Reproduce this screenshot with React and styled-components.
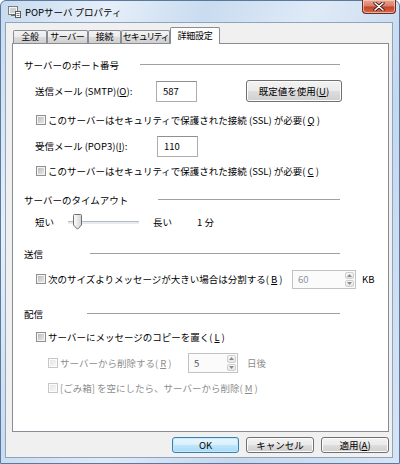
import React from "react";
import styled, { createGlobalStyle } from "styled-components";

const GlobalStyle = createGlobalStyle`
  html, body {
    margin: 0;
    padding: 0;
    background: #ffffff;
  }
  body {
    font-family: "Noto Sans CJK JP", "Noto Sans", sans-serif;
    font-size: 9.5px;
    color: #000000;
  }
`;

const Window = styled.div`
    width: 400px;
    height: 464px;
    box-sizing: border-box;
    border: 1px solid #5b789e;
    border-radius: 6px 6px 0 0;
    background: linear-gradient(115deg, #c6daef 0%, #e6eff9 18%, #c9dcf0 34%, #dfeaf7 52%, #c4d8ee 72%, #d6e5f5 100%);
    padding: 0 6px 5px 4px;

    display: flex;
    flex-direction: column;
`;

const TitleBar = styled.div`
    height: 21px;
    display: flex;
    align-items: flex-start;

    & > svg{
        margin: 4px 0 0 3px;
    }
`;

const Title = styled.span`
    margin: 4px 0 0 4px;
    flex: 1;
    line-height: 14px;
    color: #000;
`;

const CloseButton = styled.div`
    width: 34px;
    height: 14px;
    margin: -1px -3px 0 0;
    box-sizing: border-box;
    border: 1px solid #6e2b1f;
    border-top: none;
    border-radius: 0 0 4px 4px;
    background: linear-gradient(#e9a491 0%, #d98068 45%, #c2452d 55%, #d46a4a 100%);
    box-shadow: inset 0 0 0 1px rgba(255, 220, 210, 0.6);

    display: flex;
    align-items: center;
    justify-content: center;
`;

const Client = styled.div`
    flex: 1;
    background: #f0f0f0;
    border: 1px solid #8ea3bd;
    padding: 4px 3px 4px 6px;

    display: flex;
    flex-direction: column;
`;

const TabStrip = styled.div`
    height: 16px;
    padding-left: 1px;
    display: flex;
    align-items: flex-end;
    position: relative;
    z-index: 1;
`;

const Tab = styled.div`
    width: ${p => p.$w}px;
    height: ${p => p.$active ? 17 : 13}px;
    margin-bottom: ${p => p.$active ? -1 : 0}px;
    box-sizing: border-box;
    border: 1px solid #898c95;
    border-bottom: none;
    border-radius: 2px 2px 0 0;
    background: ${p => p.$active ? "#ffffff" : "linear-gradient(#f3f3f3 0%, #ebebeb 50%, #dcdcdc 51%, #cfcfcf 100%)"};

    display: flex;
    align-items: center;
    justify-content: center;
    font-size: 9px;
    line-height: 12px;
    letter-spacing: -0.2px;
    white-space: nowrap;
    overflow: hidden;
    font-feature-settings: "palt";
`;

const Panel = styled.div`
    flex: 1;
    background: #ffffff;
    border: 1px solid #898c95;
    padding: 11px 0 0 11px;

    display: flex;
    flex-direction: column;
`;

const Header = styled.div`
    width: 316px;
    height: 20px;
    margin-top: ${p => p.$mt || 0}px;
    display: flex;
    align-items: center;
`;

const HeaderText = styled.span`
    width: ${p => p.$w}px;
    flex-shrink: 0;
    white-space: nowrap;
`;

const Rule = styled.div`
    flex: 1;
    height: 1px;
    background: #a0a0a0;
    margin-top: -1px;
`;

const Row = styled.div`
    height: ${p => p.$h || 20}px;
    margin-top: ${p => p.$mt || 0}px;
    padding-left: ${p => p.$indent || 0}px;
    display: flex;
    align-items: center;
    white-space: nowrap;
    color: ${p => p.$disabled ? "#8d8d8d" : "#000"};
`;

const Label = styled.span`
    width: ${p => p.$w ? `${p.$w}px` : "auto"};
    flex-shrink: 0;
    margin-left: ${p => p.$ml || 0}px;
`;

const Check = styled.label`
    width: ${p => p.$w ? `${p.$w}px` : "auto"};
    display: flex;
    align-items: center;
    gap: 2px;
    flex-shrink: 0;
`;

const Box = styled.span`
    width: 10px;
    height: 10px;
    box-sizing: border-box;
    flex-shrink: 0;
    border: 1px solid ${p => p.$disabled ? "#c6c6c6" : "#8e8f8f"};
    box-shadow: inset 0 0 0 1px ${p => p.$disabled ? "#fbfbfb" : "#f4f4f4"};
    background: ${p => p.$disabled
        ? "linear-gradient(135deg, #e2e2e2, #fafafa)"
        : "linear-gradient(135deg, #b4b6b9, #eeeeef)"};
`;

const TextBox = styled.div`
    width: ${p => p.$w}px;
    height: 21px;
    box-sizing: border-box;
    border: 1px solid #abadb3;
    border-top-color: #8e9095;
    background: #ffffff;
    padding-left: 6px;
    display: flex;
    align-items: center;
`;

const Spin = styled.div`
    width: ${p => p.$w}px;
    height: ${p => p.$h}px;
    margin-left: ${p => p.$ml || 0}px;
    box-sizing: border-box;
    border: 1px solid #c3c3c3;
    background: #fbfbfb;
    padding: 1px;
    display: flex;
    align-items: stretch;
`;

const SpinValue = styled.span`
    flex: 1;
    padding-left: 4px;
    display: flex;
    align-items: center;
    color: ${p => p.$muted ? "#8e95a0" : "#555"};
`;

const SpinButtons = styled.div`
    width: 9px;
    display: flex;
    flex-direction: column;
    gap: 1px;
`;

const SpinBtn = styled.div`
    flex: 1;
    border: 1px solid #cfcfcf;
    border-radius: 2px;
    background: linear-gradient(#f7f7f7, #e6e6e6);
    display: flex;
    align-items: center;
    justify-content: center;
`;

const Button = styled.button`
    width: ${p => p.$w}px;
    height: ${p => p.$h}px;
    margin-left: ${p => p.$ml || 0}px;
    box-sizing: border-box;
    padding: 0;
    border: 1px solid ${p => p.$default ? "#3c7fb1" : "#707070"};
    border-radius: 3px;
    background: ${p => p.$default
        ? "linear-gradient(#eaf6fd 0%, #d9f0fc 48%, #bee6fd 52%, #a7d9f5 100%)"
        : "linear-gradient(#f2f2f2 0%, #ebebeb 48%, #dddddd 52%, #cfcfcf 100%)"};
    box-shadow: inset 0 0 0 1px ${p => p.$default ? "#c6e9fb" : "#fcfcfc"};
    font: inherit;
    color: #000;
    line-height: 12px;
    white-space: nowrap;
`;

const ButtonRow = styled.div`
    height: 16px;
    margin-top: 5px;
    display: flex;
    justify-content: flex-end;
    gap: 7px;
`;

const Slider = styled.div`
    width: ${p => p.$w}px;
    height: 16px;
    margin-left: ${p => p.$ml || 0}px;
    position: relative;
    display: flex;
    align-items: center;
`;

const Track = styled.div`
    width: 100%;
    height: 2px;
    border-top: 1px solid #b6bcc4;
    background: #e7eaee;
    box-shadow: 0 1px 0 #ffffff;
`;

const Thumb = styled.svg`
    position: absolute;
    top: 0;
`;

const Mnemonic = ({ k }) => (<>(<u>{k}</u>)</>);

const Arrow = ({ up }) => (
    <svg width="5" height="3" viewBox="0 0 5 3">
        <path d={up ? "M0 3 L2.5 0 L5 3 Z" : "M0 0 L2.5 3 L5 0 Z"} fill="#8a8a8a" />
    </svg>
);

const SpinBox = ({ w, h, ml, value, muted }) => (
    <Spin $w={w} $h={h} $ml={ml}>
        <SpinValue $muted={muted}>{value}</SpinValue>
        <SpinButtons>
            <SpinBtn><Arrow up /></SpinBtn>
            <SpinBtn><Arrow /></SpinBtn>
        </SpinButtons>
    </Spin>
);

function App() {
    const sliderValue = 1;
    const thumbLeft = 5 + (sliderValue - 1) * 7;

    return (
        <>
            <GlobalStyle />
            <Window>
                <TitleBar>
                    <svg width="13" height="13" viewBox="0 0 13 13">
                        <rect x="0.5" y="1.5" width="9" height="8" fill="#f4f4f4" stroke="#7d7d7d" />
                        <rect x="2" y="3" width="6" height="5" fill="#c9d3dc" />
                        <rect x="3" y="9.5" width="4" height="1.5" fill="#6a6a6a" />
                        <rect x="7.5" y="6.5" width="5" height="6" fill="#ffffff" stroke="#5a5a5a" />
                        <path d="M8.5 8.5 H11.5 M8.5 10.5 H11.5" stroke="#5a5a5a" strokeWidth="0.8" />
                    </svg>
                    <Title>POPサーバ プロパティ</Title>
                    <CloseButton>
                        <svg width="12" height="9" viewBox="0 0 12 9">
                            <path d="M2 1 L10 8 M10 1 L2 8" stroke="#3b1a14" strokeWidth="3.2" strokeLinecap="round" />
                            <path d="M2 1 L10 8 M10 1 L2 8" stroke="#ffffff" strokeWidth="1.6" strokeLinecap="round" />
                        </svg>
                    </CloseButton>
                </TitleBar>
                <Client>
                    <TabStrip>
                        <Tab $w={34}>全般</Tab>
                        <Tab $w={41}>サーバー</Tab>
                        <Tab $w={33}>接続</Tab>
                        <Tab $w={49}>セキュリティ</Tab>
                        <Tab $w={50} $active>詳細設定</Tab>
                    </TabStrip>
                    <Panel>
                        <Header>
                            <HeaderText $w={116}>サーバーのポート番号</HeaderText>
                            <Rule />
                        </Header>
                        <Row $h={22} $mt={5} $indent={11}>
                            <Label $w={121}>送信メール (SMTP)<Mnemonic k="O" />:</Label>
                            <TextBox $w={41}>587</TextBox>
                            <Button $w={96} $h={22} $ml={49}>既定値を使用<Mnemonic k="U" /></Button>
                        </Row>
                        <Row $mt={8} $indent={12}>
                            <Check><Box />このサーバーはセキュリティで保護された接続 (SSL) が必要<Mnemonic k="Q" /></Check>
                        </Row>
                        <Row $h={22} $mt={5} $indent={11}>
                            <Label $w={122}>受信メール (POP3)<Mnemonic k="I" />:</Label>
                            <TextBox $w={41}>110</TextBox>
                        </Row>
                        <Row $mt={4} $indent={12}>
                            <Check><Box />このサーバーはセキュリティで保護された接続 (SSL) が必要<Mnemonic k="C" /></Check>
                        </Row>

                        <Header $mt={9}>
                            <HeaderText $w={134}>サーバーのタイムアウト</HeaderText>
                            <Rule />
                        </Header>
                        <Row $mt={2} $indent={11}>
                            <Label $w={33}>短い</Label>
                            <Slider $w={71}>
                                <Track />
                                <Thumb width="9" height="16" viewBox="0 0 9 16" style={{ left: thumbLeft }}>
                                    <defs>
                                        <linearGradient id="thumbFill" x1="0" y1="0" x2="1" y2="0">
                                            <stop offset="0" stopColor="#fdfdfd" />
                                            <stop offset="1" stopColor="#d4d4d4" />
                                        </linearGradient>
                                    </defs>
                                    <path d="M1.5 0.5 H7.5 A1 1 0 0 1 8.5 1.5 V11 L4.5 15.2 L0.5 11 V1.5 A1 1 0 0 1 1.5 0.5 Z" fill="url(#thumbFill)" stroke="#6f6f6f" />
                                </Thumb>
                            </Slider>
                            <Label $ml={14} $w={44}>長い</Label>
                            <Label>1 分</Label>
                        </Row>

                        <Header $mt={12}>
                            <HeaderText $w={66}>送信</HeaderText>
                            <Rule />
                        </Header>
                        <Row $mt={5} $indent={12}>
                            <Check $w={256}><Box />次のサイズよりメッセージが大きい場合は分割する<Mnemonic k="B" /></Check>
                            <SpinBox w={64} h={19} value="60" muted />
                            <Label $ml={6}>KB</Label>
                        </Row>

                        <Header $mt={15}>
                            <HeaderText $w={63}>配信</HeaderText>
                            <Rule />
                        </Header>
                        <Row $mt={3} $indent={12}>
                            <Check><Box />サーバーにメッセージのコピーを置く<Mnemonic k="L" /></Check>
                        </Row>
                        <Row $mt={6} $indent={24} $disabled>
                            <Check $w={140}><Box $disabled />サーバーから削除する<Mnemonic k="R" /></Check>
                            <SpinBox w={50} h={20} value="5" />
                            <Label $ml={9}>日後</Label>
                        </Row>
                        <Row $mt={5} $indent={24} $disabled>
                            <Check><Box $disabled />[ごみ箱] を空にしたら、サーバーから削除<Mnemonic k="M" /></Check>
                        </Row>
                    </Panel>
                    <ButtonRow>
                        <Button $w={67} $h={16} $default>OK</Button>
                        <Button $w={68} $h={16}>キャンセル</Button>
                        <Button $w={68} $h={16}>適用<Mnemonic k="A" /></Button>
                    </ButtonRow>
                </Client>
            </Window>
        </>
    );
}

export default App;
